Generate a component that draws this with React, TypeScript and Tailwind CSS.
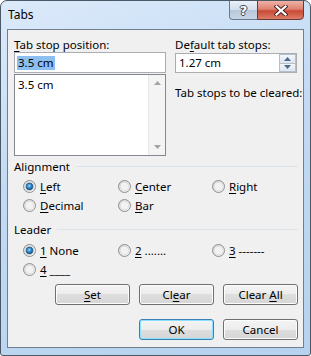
import React from 'react';

const Radio = ({ on }: { on?: boolean }) => (
  <svg width="13" height="13" viewBox="0 0 13 13" className="shrink-0">
    <defs>
      <linearGradient id="rg" x1="0" y1="0" x2="1" y2="1">
        <stop offset="0" stopColor="#cfcfcf" />
        <stop offset="1" stopColor="#fbfbfb" />
      </linearGradient>
      <radialGradient id="rb" cx="0.45" cy="0.4" r="0.6">
        <stop offset="0" stopColor="#9adcfb" />
        <stop offset="0.5" stopColor="#2d8fd0" />
        <stop offset="1" stopColor="#0f4f8a" />
      </radialGradient>
    </defs>
    <circle cx="6.5" cy="6.5" r="6" fill="url(#rg)" stroke="#8f8f8f" />
    <circle cx="6.5" cy="6.5" r="4.3" fill="#f2f2f2" stroke="#dadada" strokeWidth="0.8" />
    {on && <circle cx="6.5" cy="6.5" r="3.4" fill="url(#rb)" stroke="#1c5180" strokeWidth="0.7" />}
  </svg>
);

const Option = ({ on, children }: { on?: boolean; children: React.ReactNode }) => (
  <div className="flex items-center gap-[4px] h-[19px]">
    <Radio on={on} />
    <span className="leading-[15px] whitespace-nowrap">{children}</span>
  </div>
);

const Btn = ({ children, primary }: { children: React.ReactNode; primary?: boolean }) => (
  <div
    className={
      primary
        ? 'w-[75px] h-[21px] rounded-[3px] border border-[#3c7fb1] shadow-[inset_0_0_0_1px_#8ae0ff] bg-[linear-gradient(#f4f4f4_0%,#ececec_50%,#dedede_50%,#d6d6d6_100%)] flex items-center justify-center leading-none'
        : 'w-[75px] h-[21px] rounded-[3px] border border-[#707070] shadow-[inset_0_0_0_1px_#fcfcfc] bg-[linear-gradient(#f4f4f4_0%,#ececec_50%,#dedede_50%,#d6d6d6_100%)] flex items-center justify-center leading-none'
    }
  >
    <span className="whitespace-pre">{children}</span>
  </div>
);

const GroupTitle = ({ children }: { children: React.ReactNode }) => (
  <div className="flex items-center gap-[6px] h-[15px] pr-[5px]">
    <span className="leading-[15px]">{children}</span>
    <div className="flex-1 h-px bg-[#dce4ea]" />
  </div>
);

const U = ({ children }: { children: React.ReactNode }) => (
  <span className="underline decoration-1 underline-offset-[2px]">{children}</span>
);

export default function App() {
  return (
    <div className="w-[311px] h-[356px] flex flex-col border border-[#4b5966] rounded-t-[7px] rounded-b-[3px] bg-[linear-gradient(160deg,#dceafa_0%,#c3dbf4_40%,#b7d1ee_100%)] font-['Noto_Sans',sans-serif] text-[11.5px] text-black overflow-hidden">
      <div className="h-[28px] shrink-0 flex items-start justify-between">
        <span className="pl-[7px] pt-[6px] leading-[15px] text-[12px]">Tabs</span>
        <div className="flex mr-[6px] -mt-px">
          <div className="w-[28px] h-[20px] rounded-bl-[4px] border border-[#6b7b8f] border-r-0 bg-[linear-gradient(#e9f0f8_0%,#d3dfed_50%,#b7c8dc_50%,#c8d6e6_100%)] flex items-center justify-center">
            <span className="font-['DejaVu_Sans',sans-serif] font-bold text-[13px] leading-none text-white [text-shadow:1px_0_#3a4656,-1px_0_#3a4656,0_1px_#3a4656,0_-1px_#3a4656]">?</span>
          </div>
          <div className="w-[47px] h-[20px] rounded-br-[4px] border border-[#6b3a35] bg-[linear-gradient(#eeb2a6_0%,#df8272_45%,#c94a36_55%,#dc7c66_100%)] flex items-center justify-center">
            <svg width="14" height="11" viewBox="0 0 14 11">
              <path d="M2.5 1.5 L11.5 9.5 M11.5 1.5 L2.5 9.5" stroke="#4a2320" strokeWidth="4" strokeLinecap="square" />
              <path d="M2.5 1.5 L11.5 9.5 M11.5 1.5 L2.5 9.5" stroke="#ffffff" strokeWidth="2.2" strokeLinecap="square" />
            </svg>
          </div>
        </div>
      </div>

      <div className="flex-1 mx-[6px] mb-[7px] border border-[#6f7f8f] bg-[#f0f0f0] pt-[7px] flex flex-col">
        <div className="flex pl-[6px] gap-[9px]">
          <div className="w-[152px] flex flex-col">
            <div className="leading-[15px] whitespace-nowrap">
              <U>T</U>ab stop position:
            </div>
            <div className="h-[21px] border border-[#abadb3] bg-white flex items-center px-[3px]">
              <span className="bg-[#8cbff0] leading-[14px] px-[1px] -ml-[1px]">3.5 cm</span>
            </div>
            <div className="h-[82px] mt-px border border-[#828790] bg-white flex">
              <div className="flex-1 px-[3px] pt-[2px] leading-[15px]">3.5 cm</div>
              <div className="w-[17px] bg-[#f4f4f4] border-l border-[#e6e6e6] flex flex-col justify-between items-center py-[6px]">
                <svg width="7" height="4" viewBox="0 0 7 4"><path d="M0 4 L3.5 0 L7 4Z" fill="#a3a3a3" /></svg>
                <svg width="7" height="4" viewBox="0 0 7 4"><path d="M0 0 L3.5 4 L7 0Z" fill="#a3a3a3" /></svg>
              </div>
            </div>
          </div>
          <div className="w-[122px] flex flex-col">
            <div className="leading-[15px] whitespace-nowrap">
              De<U>f</U>ault tab stops:
            </div>
            <div className="h-[20px] mt-px border border-[#abadb3] bg-white flex">
              <div className="flex-1 px-[3px] leading-[18px]">1.27 cm</div>
              <div className="w-[17px] flex flex-col">
                <div className="flex-1 border border-[#b4bfcc] bg-[linear-gradient(#f3f6fa,#dde4ee)] flex items-center justify-center">
                  <svg width="7" height="4" viewBox="0 0 7 4"><path d="M0 4 L3.5 0 L7 4Z" fill="#4d6a91" /></svg>
                </div>
                <div className="flex-1 border border-t-0 border-[#b4bfcc] bg-[linear-gradient(#f3f6fa,#dde4ee)] flex items-center justify-center">
                  <svg width="7" height="4" viewBox="0 0 7 4"><path d="M0 0 L3.5 4 L7 0Z" fill="#4d6a91" /></svg>
                </div>
              </div>
            </div>
            <div className="mt-[12px] leading-[15px] whitespace-nowrap">Tab stops to be cleared:</div>
          </div>
        </div>

        <div className="pl-[6px] mt-[3px]">
          <GroupTitle>Alignment</GroupTitle>
          <div className="grid grid-cols-[95px_94px_auto] pl-[9px] mt-[3px]">
            <Option on><U>L</U>eft</Option>
            <Option><U>C</U>enter</Option>
            <Option><U>R</U>ight</Option>
            <Option><U>D</U>ecimal</Option>
            <Option><U>B</U>ar</Option>
          </div>
          <div className="mt-[7px]">
            <GroupTitle>Leader</GroupTitle>
          </div>
          <div className="grid grid-cols-[95px_94px_auto] pl-[9px] mt-[4px]">
            <Option on><U>1</U> None</Option>
            <Option><U>2</U> .......</Option>
            <Option><U>3</U> -------</Option>
            <Option><U>4</U> ____</Option>
          </div>
        </div>

        <div className="flex justify-end gap-[9px] pr-[5px] mt-[5px]">
          <Btn><U>S</U>et</Btn>
          <Btn>Cl<U>e</U>ar</Btn>
          <Btn>Clear <U>A</U>ll</Btn>
        </div>
        <div className="flex justify-end gap-[9px] pr-[5px] mt-[14px]">
          <Btn primary>OK</Btn>
          <Btn>Cancel</Btn>
        </div>
      </div>
    </div>
  );
}
